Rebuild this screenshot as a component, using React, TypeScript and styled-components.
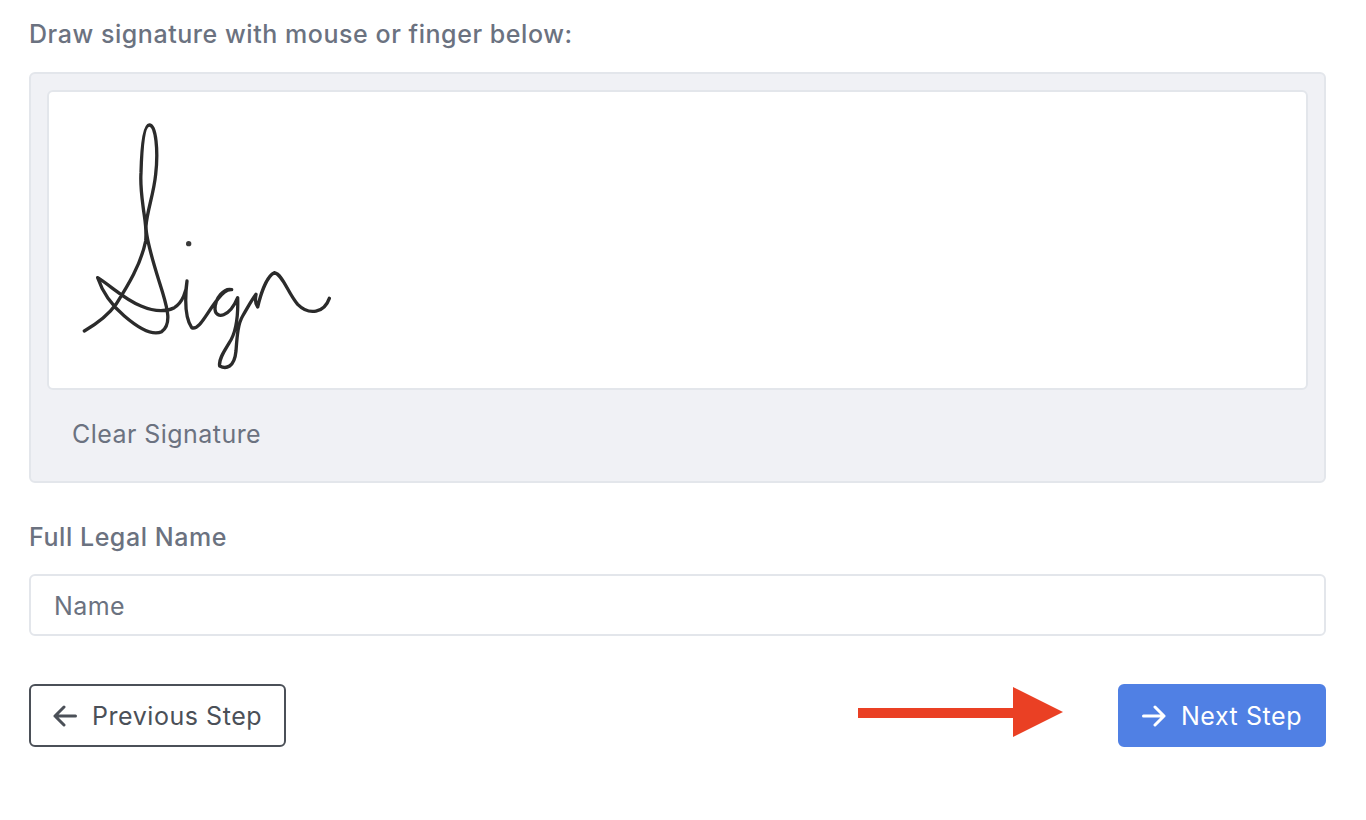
import React from "react";
import styled, { createGlobalStyle } from "styled-components";

const GlobalStyle = createGlobalStyle`
  html, body {
    margin: 0;
    padding: 0;
    background: #fff;
    font-family: Inter, "Liberation Sans", sans-serif;
  }
`;

const Page = styled.div`
  padding: 21px 40px 0 29px;
  display: flex;
  flex-direction: column;
`;

const Label = styled.label`
  display: block;
  font-size: 25px;
  line-height: 27px;
  font-weight: 500;
  color: #6b7280;
  letter-spacing: 0.55px;
`;

const SignatureBox = styled.div`
  margin-top: 24px;
  height: 411px;
  box-sizing: border-box;
  padding: 16px;
  background: #f0f1f5;
  border: 2px solid #e3e6eb;
  border-radius: 6px;
`;

const SignatureCanvas = styled.div`
  height: 300px;
  box-sizing: border-box;
  padding: 19px 0 0 12px;
  background: #fff;
  border: 2px solid #e3e6eb;
  border-radius: 6px;
`;

const SignatureDrawing = styled.svg`
  display: block;
  filter: blur(0.45px);
`;

const ClearButton = styled.div`
  margin: 30px 0 0 25px;
  font-size: 25px;
  line-height: 28px;
  color: #6b7280;
  letter-spacing: 0.45px;
`;

const NameLabel = styled(Label)`
  margin-top: 41px;
`;

const NameInput = styled.input`
  display: block;
  margin-top: 23px;
  width: 100%;
  height: 62px;
  box-sizing: border-box;
  padding: 2px 23px 0;
  background: #fff;
  border: 2px solid #e3e6eb;
  border-radius: 6px;
  font-family: inherit;
  font-size: 25px;
  letter-spacing: 0.45px;
  color: #6b7280;
  outline: none;

  &::placeholder {
    color: #6b7280;
    opacity: 1;
  }
`;

const Actions = styled.div`
  margin-top: 48px;
  display: flex;
  justify-content: space-between;
  align-items: center;
`;

const NextGroup = styled.div`
  display: flex;
  align-items: center;
  gap: 55px;
`;

const AnnotationArrow = styled.svg`
  display: block;
  margin-bottom: 7px;
`;

const StepButton = styled.button<{ $primary?: boolean }>`
  height: 63px;
  box-sizing: border-box;
  display: flex;
  align-items: center;
  gap: 15px;
  padding: 0 22px;
  border-radius: 6px;
  border: 2px solid ${({ $primary }) => ($primary ? "#5080e4" : "#4b5058")};
  background: ${({ $primary }) => ($primary ? "#5080e4" : "#fff")};
  color: ${({ $primary }) => ($primary ? "#fff" : "#4b5058")};
  font-family: inherit;
  font-size: 25px;
  font-weight: 400;
  letter-spacing: 0.55px;

  svg {
    flex-shrink: 0;
  }
`;

function Signature() {
  return (
    <SignatureDrawing width="290" height="270" viewBox="0 0 870 810" fill="none">
      <path
        d="M70 660 C105 640 140 615 165 580 C200 525 240 460 254 390 C258 350 250 320 246 285 C240 240 238 215 240 185 C242 110 248 42 265 42 C285 42 292 120 284 190 C278 250 258 300 255 345 C254 390 285 480 305 545 C320 595 332 640 302 662 C270 678 225 645 190 615 C155 585 125 545 110 500 C150 525 190 565 240 585 C275 600 310 605 340 590 C365 575 377 540 378 510 C372 560 372 620 392 650 C415 660 440 600 470 565 C485 545 500 535 512 536 C490 530 462 560 462 595 C465 625 505 620 530 560 C532 620 525 665 505 695 C490 720 472 745 476 765 C495 775 520 770 525 720 C528 680 530 640 545 615 C560 590 570 570 585 550 C582 565 584 580 590 588 C600 545 618 495 640 485 C665 490 680 545 710 580 C745 615 790 605 805 562"
        stroke="#2b2b2b"
        strokeWidth="10"
        strokeLinecap="round"
        strokeLinejoin="round"
      />
      <circle cx="383" cy="398" r="8" fill="#3a3a3a" />
    </SignatureDrawing>
  );
}

function RedArrow() {
  return (
    <AnnotationArrow width="205" height="50" viewBox="0 0 205 50">
      <path d="M0 21 H155 V0 L205 25 L155 50 V31 H0 Z" fill="#ea4024" />
    </AnnotationArrow>
  );
}

function LeftArrowIcon() {
  return (
    <svg width="24" height="22" viewBox="0 0 24 22" fill="none">
      <path
        d="M22.5 11 H2 M11 2 L2 11 L11 20"
        stroke="currentColor"
        strokeWidth="3"
        strokeLinecap="round"
        strokeLinejoin="round"
      />
    </svg>
  );
}

function RightArrowIcon() {
  return (
    <svg width="24" height="22" viewBox="0 0 24 22" fill="none">
      <path
        d="M1.5 11 H22 M13 2 L22 11 L13 20"
        stroke="currentColor"
        strokeWidth="3"
        strokeLinecap="round"
        strokeLinejoin="round"
      />
    </svg>
  );
}

export default function App() {
  return (
    <>
      <GlobalStyle />
      <Page>
        <Label>Draw signature with mouse or finger below:</Label>
        <SignatureBox>
          <SignatureCanvas>
            <Signature />
          </SignatureCanvas>
          <ClearButton>Clear Signature</ClearButton>
        </SignatureBox>
        <NameLabel>Full Legal Name</NameLabel>
        <NameInput placeholder="Name" />
        <Actions>
          <StepButton>
            <LeftArrowIcon />
            Previous Step
          </StepButton>
          <NextGroup>
            <RedArrow />
            <StepButton $primary>
              <RightArrowIcon />
              Next Step
            </StepButton>
          </NextGroup>
        </Actions>
      </Page>
    </>
  );
}
